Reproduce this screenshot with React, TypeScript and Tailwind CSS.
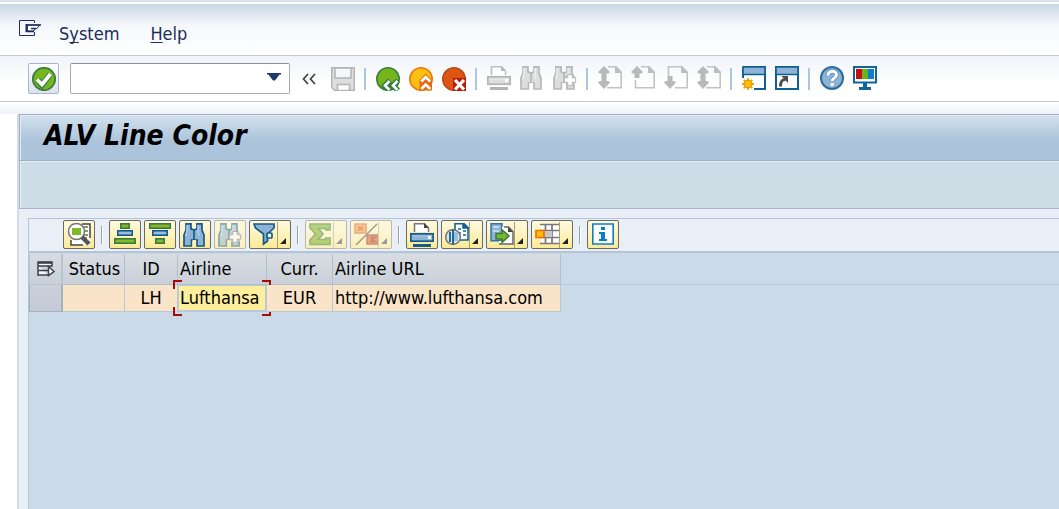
import type { ReactNode } from "react";

function Icon({ children, faded = false, w = 24 }: { children: ReactNode; faded?: boolean; w?: number }) {
  return (
    <svg
      width={w}
      height="24"
      viewBox={`0 0 ${w} 24`}
      fill="none"
      aria-hidden="true"
      className={faded ? "block shrink-0 opacity-50" : "block shrink-0"}
    >
      {children}
    </svg>
  );
}

/* ---------- standard toolbar icons ---------- */

const Save = () => (
  <Icon>
    <path d="M.7.7h22.6v22.6H3.5L.7 20.5z" fill="#dedede" stroke="#b4b4b4" strokeWidth="1.5" />
    <path d="M4 1h16v10H4z" fill="#f4f6f9" stroke="#b4b4b4" strokeWidth="1.5" />
    <path d="M6.500 17.500h12v6h-12z" fill="#fff" stroke="#b4b4b4" strokeWidth="1.5" />
  </Icon>
);

const Check = () => (
  <Icon>
    <circle cx="12" cy="12" r="11.200" fill="#76b51b" stroke="#3c7f42" strokeWidth="1.800" />
    <path d="M5.500 13l4.500 5L18 7.500" stroke="#3c7f42" strokeWidth="6" />
    <path d="M5 12.500l5 5L18.500 7" stroke="#fff" strokeWidth="3.600" />
  </Icon>
);

const Back = () => (
  <Icon>
    <circle cx="12" cy="12" r="11.200" fill="#76b51b" stroke="#3c7f42" strokeWidth="1.600" />
    <path d="M14 13.500L9 18.500l5 5M22 13.500l-5 5 5 5" stroke="#2f7a3c" strokeWidth="5.500" />
    <path d="M13.500 14L9 18.500l4.500 4.500M21.500 14L17 18.500l4.500 4.500" stroke="#fff" strokeWidth="2.600" />
  </Icon>
);

const Exit = () => (
  <Icon>
    <circle cx="12" cy="12" r="11.200" fill="#fdc010" stroke="#ee7a10" strokeWidth="1.600" />
    <path d="M10.500 14.500l6-6.500 6.500 6.500v9H10.500z" fill="#e86a10" />
    <path d="M12 15l4.700-4.700L21.500 15M12 22.500l4.700-4.700 4.800 4.700" stroke="#e86a10" strokeWidth="5" />
    <path d="M12.300 14.500l4.400-4.400 4.500 4.400M12.300 22l4.400-4.400 4.500 4.400" stroke="#fff" strokeWidth="2.800" />
  </Icon>
);

const Cancel = () => (
  <Icon>
    <circle cx="12" cy="12" r="11.200" fill="#dc5512" stroke="#b84a1c" strokeWidth="1.600" />
    <path d="M11 11h13v13H11z" fill="#bd1c0c" />
    <path d="M13 13l9 9.500M22 13l-9 9.500" stroke="#fff" strokeWidth="3.200" />
  </Icon>
);

function Printer({ gray = false }: { gray?: boolean }) {
  const edge = gray ? "#b4b4b4" : "#145b87";
  return (
    <Icon>
      <path d="M4.500 9V.800h10L18.500 5v4" fill="#fff" stroke={gray ? "#bdbdbd" : "#777"} strokeWidth="1.500" />
      <path d="M14 0v5h5z" fill={gray ? "#b8b8b8" : "#444"} />
      <rect x=".8" y="10.800" width="22.400" height="7.400" fill={gray ? "#dedede" : "#8fb2d7"} stroke={edge} strokeWidth="1.700" />
      <path d="M2 13h20" stroke={gray ? "#eeeeee" : "#a8c6e3"} />
      <path d="M18 13h3v3h-3z" fill="#fff" />
      <path d="M3 21h18v3H3z" fill={edge} />
    </Icon>
  );
}

function Binoculars({ gray = false, plus = false }: { gray?: boolean; plus?: boolean }) {
  const edge = gray ? "#b7b7b7" : "#145b87";
  return (
    <Icon>
      <path
        d="M3 .8h5v5l3 1.200V17H8.500v6H1V12l2-5zM14 .800h5V7l2 5v11h-7v-6h-3V7l3-1.200z"
        fill={gray ? "#dddddd" : "#8fb2d7"}
        stroke={edge}
        strokeWidth="1.700"
      />
      <path d="M4 2v5L3 13M15 2v5l1 6" stroke={gray ? "#eee" : "#b6d0e9"} strokeWidth="1.500" />
      <path d="M9.500 17h3.500v7H9.500z" fill={gray ? "#fff" : "#fff0b0"} />
      {plus && (
        <>
          <circle cx="17" cy="14" r="6" fill={gray ? "#c4c4c4" : "#8fb2d7"} />
          <path
            d="M14.800 8.500h4.400v3.300h3.500v4.400h-3.500v3.500h-4.400v-3.500h-3.500v-4.400h3.500z"
            fill="#fff"
            stroke={gray ? "#b7b7b7" : "#6a6ab0"}
            strokeWidth="1"
          />
        </>
      )}
    </Icon>
  );
}

function PageMove({ up = false, down = false }: { up?: boolean; down?: boolean }) {
  return (
    <Icon>
      <path
        d={up && down ? "M10 .8h8l5.200 5.200v15.700H9" : up ? "M10 .800h8l5.200 5.200v15.700H4.500V14" : "M4.500 11V.800H18l5.200 5.200v15.700H11"}
        stroke="#c3c3c3"
        strokeWidth="1.600"
      />
      <path d="M17 0v7h7z" fill="#bdbdbd" />
      {up && <path d="M6 0l6 6-1.500 1.500H8.500V12h-5V7.500H1.500L0 6z" fill="#b9b9b9" />}
      {down && <path d="M3.500 10h5v5h2L12 16.500 6 23l-6-6.500L1.500 15h2z" fill="#b9b9b9" />}
    </Icon>
  );
}

const NewSession = () => (
  <Icon>
    <path d="M2 9h20v13H2z" fill="#fff" />
    <path d="M1 1h22v22H12M1 12V1" stroke="#0f5f92" strokeWidth="2" />
    <path d="M1 1h22v7.500H1z" fill="#8fb2d7" stroke="#0f5f92" strokeWidth="1.600" />
    <path d="M0 12.500h12V24H0z" fill="#fafbfd" />
    <path
      d="M6 12v12M0 18h12M1.800 13.800l8.400 8.400M10.200 13.800l-8.400 8.400"
      stroke="#f59a08"
      strokeWidth="1.800"
    />
    <circle cx="6" cy="18" r="3.800" fill="#ffc400" stroke="#f28a00" />
  </Icon>
);

const Shortcut = () => (
  <Icon>
    <path d="M1 1h22v22H1z" fill="#fff" stroke="#0f5f92" strokeWidth="2" />
    <path d="M1 1h22v7.500H1z" fill="#8fb2d7" stroke="#0f5f92" strokeWidth="1.600" />
    <path d="M5.500 20.500c0-5 1-7 5-7" stroke="#4a4a4a" strokeWidth="3" />
    <path d="M6.500 10H13v7z" fill="#4a4a4a" />
  </Icon>
);

const HelpMark = () => (
  <Icon>
    <circle cx="12" cy="12" r="11" fill="#8fb2d7" stroke="#2b6c9c" strokeWidth="2" />
    <path d="M8 9.500C8 4 16.500 4 16.500 8.800c0 3-4.300 3.200-4.300 6.200" stroke="#5f93bf" strokeWidth="5" />
    <path d="M8 9.500C8 4 16.500 4 16.500 8.800c0 3-4.300 3.200-4.300 6.200M12.200 17v3" stroke="#fff" strokeWidth="3" />
  </Icon>
);

const Monitor = () => (
  <Icon>
    <path d="M1 1h22v15.500H1z" fill="#fff" stroke="#12649a" strokeWidth="2" />
    <path d="M3 3h6v10H3z" fill="#c80c14" />
    <path d="M9 3h6v10H9z" fill="#6cb41c" />
    <path d="M15 3h6v10h-6z" fill="#0c7fd0" />
    <path d="M10 17h4v5h-4zM6 21h12v3H6z" fill="#12649a" />
  </Icon>
);

/* ---------- grid toolbar icons ---------- */

const Details = () => (
  <Icon>
    <path d="M13 1h10v21H4v-6" fill="#fff" />
    <path d="M15 1h8v14M4 17v5h12" stroke="#444" strokeWidth="1.500" />
    <path d="M16 4h5M17 8h4M17 12h4M15 15h5" stroke="#4f8a34" strokeWidth="1.500" />
    <circle cx="9.500" cy="8.500" r="8" fill="#fff" stroke="#747474" strokeWidth="1.500" />
    <path d="M5 5h9v7H5z" fill="#80b82b" />
    <path d="M15 14l7 7" stroke="#555" strokeWidth="4.500" />
  </Icon>
);

function SortBars({ descending = false }: { descending?: boolean }) {
  return (
    <Icon>
      <g strokeWidth="1.600">
        <rect x={descending ? 1.800 : 7.800} y=".8" width={descending ? 20.400 : 8.400} height="4.400" fill="#86b928" stroke="#397a42" />
        <rect x="4.800" y="7.800" width="14.400" height="4.400" fill="#9bbde0" stroke="#145b87" />
        <rect x={descending ? 7.800 : 1.800} y="15.800" width={descending ? 8.400 : 20.400} height="4.400" fill="#86b928" stroke="#397a42" />
      </g>
    </Icon>
  );
}

const Filter = () => (
  <Icon>
    <path d="M1 1h20v4l-6.500 6v7l-4 3V11L2.500 5z" fill="#8fb2d7" stroke="#145b87" strokeWidth="1.700" />
    <rect x="14" y="10" width="5" height="5" rx="1" fill="#f0f5fb" stroke="#145b87" strokeWidth="1.700" />
  </Icon>
);

const Sum = () => (
  <Icon faded>
    <path d="M1 1h20v6h-4V5.500H9.500L14 11l-5 5.500H17V15h4v6.500H1V17l5.500-6L1 5z" fill="#75b21a" stroke="#397a42" strokeWidth="1.700" />
  </Icon>
);

const Subtotal = () => (
  <Icon faded>
    <path d="M1 1h11v9H1z" fill="#f79a4a" stroke="#db6330" strokeWidth="1.500" />
    <path d="M13 12h11v9H13z" fill="#dc5438" stroke="#a92d25" strokeWidth="1.500" />
    <path d="M4 3.500l5 4M9 3.500l-5 4" stroke="#c5381d" strokeWidth="1.500" />
    <path d="M16 14.500h5l-3 2 3 2h-5" stroke="#842a25" strokeWidth="1.300" />
    <path d="M2 22L23 1" stroke="#444" strokeWidth="1.500" />
  </Icon>
);

const Views = () => (
  <Icon>
    <path d="M10 .8h9l4 4V17H10z" fill="#fff" stroke="#12649a" strokeWidth="1.600" />
    <path d="M18 0v5h5zM13 6h3M18 8h3M13 10h3M18 12h3" fill="#12649a" stroke="#12649a" strokeWidth="1.600" />
    <circle cx="8" cy="14" r="7.300" fill="#d8e8f4" stroke="#747474" strokeWidth="1.500" />
    <path d="M8 6.500v15M5 9v10" stroke="#145b87" strokeWidth="1.800" />
    <path d="M9 9h4v9H9z" fill="#9bbde0" />
  </Icon>
);

const Export = () => (
  <Icon>
    <path d="M1 .8h11v17H1z" fill="#8fb2d7" stroke="#3474a5" strokeWidth="1.500" />
    <path d="M3 4h6M3 8h6" stroke="#d8e6f4" strokeWidth="1.500" />
    <path d="M11 4h8l4 4v13H9v-3h3V4z" fill="#fff" />
    <path d="M14 4h4.500L23 8.500V21H9" stroke="#666" strokeWidth="1.500" />
    <path d="M18 4v5h5z" fill="#444" />
    <path d="M6 10.500h6V7l7 6-7 6.500V16H6z" fill="#79b82a" stroke="#367a3c" strokeWidth="1.500" />
  </Icon>
);

const Layout = () => (
  <Icon>
    <path d="M6 1.500h18v19H6z" fill="#fff" />
    <path d="M5 1.500h19M5 7.500h19M5 14.500h19M5 20.500h19M10.500 1v20M17 1v20" stroke="#777" strokeWidth="1.700" />
    <path d="M10 8h7v6h-7z" fill="#c8c8c8" />
    <path d="M1 7.500h8v7H1z" fill="#ffc20b" stroke="#ee6d0f" strokeWidth="1.700" />
  </Icon>
);

const Info = () => (
  <Icon>
    <path d="M1.800 1h20.400v20H1.800z" fill="#fff" stroke="#0a7fc4" strokeWidth="1.600" />
    <path d="M10 4h4v3h-4zM8 9h6v7h2v2H8v-2h2v-5H8z" fill="#0a7fc4" />
  </Icon>
);

/* ---------- buttons ---------- */

function Tool({ label, children }: { label: string; children: ReactNode }) {
  return (
    <button type="button" aria-label={label} className="block shrink-0">
      {children}
    </button>
  );
}

const Divider = () => <span className="h-[22px] w-[3px] shrink-0 border-l-2 border-[#a9c6e2]" />;

function GridButton({
  label,
  children,
  menu = false,
  disabled = false,
}: {
  label: string;
  children: ReactNode;
  menu?: boolean;
  disabled?: boolean;
}) {
  const edge = disabled ? "border-[#bbb7a9] from-[#fcf8df] to-[#fbf0bd]" : "border-[#6d6a60] from-[#fffae0] to-[#fcea96]";
  return (
    <button
      type="button"
      aria-label={label}
      disabled={disabled}
      className={`relative flex h-[29px] shrink-0 items-center rounded-xs border bg-linear-to-b pt-px pl-[3px] ${edge} ${menu ? "w-[42px]" : "w-8"}`}
    >
      {children}
      {menu && (
        <>
          <span className={`h-full border-l ${disabled ? "border-[#d5cfb5]" : "border-[#aaa06f]"}`} />
          <svg
            width="6"
            height="6"
            viewBox="0 0 6 6"
            aria-hidden="true"
            className={`absolute right-1 bottom-1 ${disabled ? "fill-[#999]" : "fill-[#222]"}`}
          >
            <path d="M6 0v6H0z" />
          </svg>
        </>
      )}
    </button>
  );
}

const GridDivider = () => (
  <span className="flex h-[29px] w-2 shrink-0 items-center justify-center">
    <span className="h-[18px] w-0.5 border-r border-l border-r-white border-l-[#9da1a7]" />
  </span>
);

const columns = [
  { title: "Status", className: "w-[62px] pl-0.5 text-center" },
  { title: "ID", className: "w-[53px] text-center" },
  { title: "Airline", className: "w-[89px] pl-0.5 text-left" },
  { title: "Curr.", className: "w-[66px] text-center" },
  { title: "Airline URL", className: "w-[228px] pl-0.5 text-left" },
];

const rows = [["", "LH", "Lufthansa", "EUR", "http://www.lufthansa.com"]];

function CellCursor() {
  const corner = "absolute size-[9px] border-[#a80a0a]";
  return (
    <span className="pointer-events-none absolute -inset-x-[5px] -inset-y-[5px]">
      <span className={`${corner} top-0 left-0 border-t-2 border-l-2`} />
      <span className={`${corner} top-0 right-0 border-t-2 border-r-2`} />
      <span className={`${corner} bottom-0 left-0 border-b-2 border-l-2`} />
      <span className={`${corner} right-0 bottom-0 border-r-2 border-b-2`} />
    </span>
  );
}

export default function App() {
  return (
    <div className="flex min-h-screen flex-col bg-white font-['DejaVu_Sans_Condensed','DejaVu_Sans',sans-serif] text-lg leading-6 text-black">
      <div className="h-1 border-t border-b-2 border-t-[#dbe6f2] border-b-white bg-[#d5e1ef]" />
      <nav className="flex h-[52px] items-start gap-[18px] border-b border-[#c2c9d3] bg-linear-to-b from-[#c9d6e6] via-[#f4f7fa] via-40% to-white pt-4 pl-[19px] text-[#1c2d5e]">
        <button type="button" aria-label="Menu">
          <svg width="22" height="17" viewBox="0 0 22 17" fill="none" stroke="#1c2d5e" aria-hidden="true">
            <path d="M15.500 3V.500H.500v15h15V12" />
            <path d="M8 5h12.500L18 8.500h-2L14.500 11H8z" fill="#fff" />
            <path d="M8 11.500V5h14M7 11.500h8M17 8.500h-5" strokeWidth="1.500" />
            <path d="M7.500 4v8" strokeWidth="2" />
          </svg>
        </button>
        <div className="flex gap-[31px] pt-0.5">
          <button type="button">
            S<span className="underline underline-offset-2 [text-decoration-skip-ink:none]">y</span>stem
          </button>
          <button type="button">
            <span className="underline underline-offset-2">H</span>elp
          </button>
        </div>
      </nav>

      <div className="flex h-[46px] items-center gap-[9px] border-b border-[#c2cad5] bg-linear-to-b from-[#f0f3f9] to-white to-60% pl-7">
        <button
          type="button"
          aria-label="Enter"
          className="mr-0.5 flex h-[31px] w-[31px] shrink-0 items-center justify-center rounded-xs border border-[#a9b6d3] bg-linear-to-b from-white to-[#dce2ec]"
        >
          <Check />
        </button>
        <div className="flex h-[31px] w-[220px] shrink-0 items-center rounded-xs border border-[#a9abb0] border-t-[#8e9095] bg-white">
          <input aria-label="Command" className="h-full min-w-0 flex-1 bg-transparent px-1 outline-none" />
          <button type="button" aria-label="Command history" className="px-2 pb-1">
            <svg width="14" height="8" viewBox="0 0 14 8" fill="#20376c" aria-hidden="true">
              <path d="M0 0h14v1.500h-1.500L8 7.500H6L1.500 1.500H0z" />
            </svg>
          </button>
        </div>
        <button type="button" aria-label="Hide command field" className="mr-1.5 ml-[3px] shrink-0">
          <svg width="14" height="12" viewBox="0 0 14 12" fill="none" stroke="#484848" strokeWidth="1.800" aria-hidden="true">
            <path d="M6 1L1.500 6 6 11M13 1L8.500 6l4.500 5" />
          </svg>
        </button>
        <Tool label="Save"><Save /></Tool>
        <Divider />
        <Tool label="Back"><Back /></Tool>
        <Tool label="Exit"><Exit /></Tool>
        <Tool label="Cancel"><Cancel /></Tool>
        <Divider />
        <div className="flex gap-[9px] pb-0.5">
          <Tool label="Print"><Printer gray /></Tool>
          <Tool label="Find"><Binoculars gray /></Tool>
          <Tool label="Find next"><Binoculars gray plus /></Tool>
        </div>
        <Divider />
        <div className="flex gap-[9px] pb-0.5">
          <Tool label="First page"><PageMove up down /></Tool>
          <Tool label="Previous page"><PageMove up /></Tool>
          <Tool label="Next page"><PageMove down /></Tool>
          <Tool label="Last page"><PageMove up down /></Tool>
        </div>
        <Divider />
        <div className="flex gap-[9px] pb-0.5">
          <Tool label="New session"><NewSession /></Tool>
          <Tool label="Create shortcut"><Shortcut /></Tool>
        </div>
        <Divider />
        <div className="flex gap-[9px] pb-0.5">
          <Tool label="Help on screen"><HelpMark /></Tool>
          <Tool label="Customize layout"><Monitor /></Tool>
        </div>
      </div>

      <div className="flex flex-1 flex-col bg-linear-to-b from-white to-[#edf2f8] to-[12px]">
        <div className="mt-3 flex flex-1 bg-white pl-[17px]">
          <main className="flex min-w-0 flex-1 flex-col border-l-2 border-[#d2dce8] bg-[#e8eff6]">
            <header className="flex h-[47px] items-center border-t border-b border-l border-[#9fb0c5] bg-linear-to-b from-[#d3e1ec] to-[#abc3db] to-60% pb-1 pl-6 shadow-[inset_1px_1px_0_#e2ebf3]">
              <h1 className="text-[28px] leading-8 font-bold italic">ALV Line Color</h1>
            </header>
            <div className="h-12 border-b border-l border-[#a6b5c9] bg-[#cfdde7] shadow-[inset_1px_1px_0_#e8f0f6]" />

            <section className="mt-[9px] ml-[9px] flex flex-1 flex-col border-t border-l border-[#b5c4d7]">
              <div className="flex h-[33px] items-start gap-[3px] border-b border-[#b5c4d7] pt-px pl-[34px]">
                <GridButton label="Details"><Details /></GridButton>
                <GridDivider />
                <GridButton label="Sort ascending"><SortBars /></GridButton>
                <GridButton label="Sort descending"><SortBars descending /></GridButton>
                <GridButton label="Find in list"><Binoculars /></GridButton>
                <GridButton label="Find next in list" disabled>
                  <span className="opacity-50"><Binoculars plus /></span>
                </GridButton>
                <GridButton label="Set filter" menu><Filter /></GridButton>
                <GridDivider />
                <GridButton label="Total" menu disabled><Sum /></GridButton>
                <GridButton label="Subtotals" menu disabled><Subtotal /></GridButton>
                <GridDivider />
                <GridButton label="Print list"><Printer /></GridButton>
                <GridButton label="Views" menu><Views /></GridButton>
                <GridButton label="Export" menu><Export /></GridButton>
                <GridButton label="Change layout" menu><Layout /></GridButton>
                <GridDivider />
                <GridButton label="Information"><Info /></GridButton>
              </div>

              <div className="flex-1 border-t border-[#b5c4d7] bg-[#cbdae8] bg-[linear-gradient(#b9c8dc,#b9c8dc)] bg-size-[100%_1px] bg-position-[0_31px] bg-no-repeat pt-px">
                <table className="table-fixed border-separate border-spacing-0">
                  <thead>
                    <tr className="h-[31px]">
                      <th className="w-[34px] border-r-2 border-b border-l border-[#b7c4d4] bg-linear-to-b from-[#d6dce1] to-[#c9d0d8] p-0">
                        <button type="button" aria-label="Select all" className="flex w-full justify-center">
                          <svg width="18" height="16" viewBox="0 0 18 16" fill="none" stroke="#3c3f50" strokeWidth="1.500" aria-hidden="true">
                            <path d="M1 1h14v4H1zM1 5v9h10M1 9.500h10" fill="#f5f6f8" />
                            <path d="M1 1.800h14" strokeWidth="2" />
                            <path d="M11.500 5.500v9l5.500-4z" fill="#fff" />
                          </svg>
                        </button>
                      </th>
                      {columns.map((c) => (
                        <th
                          key={c.title}
                          className={`border-r border-b border-[#b2bfcf] bg-linear-to-b from-[#d8dde2] to-[#c9d0d8] p-0 font-normal whitespace-nowrap ${c.className}`}
                        >
                          {c.title}
                        </th>
                      ))}
                    </tr>
                  </thead>
                  <tbody>
                    {rows.map((row) => (
                      <tr key={row[1]} className="h-[27px]">
                        <td className="border-r-2 border-b border-l border-[#a3b1c1] bg-linear-to-b from-[#cbd1db] to-[#c5cbd5] p-0">
                          <button type="button" aria-label="Select row" className="block h-full w-full" />
                        </td>
                        {row.map((value, i) => (
                          <td
                            key={columns[i].title}
                            className={`relative border-r border-b border-[#b9c8da] p-0 whitespace-nowrap ${columns[i].className} ${
                              i === 2 ? "bg-[#ffef9c] shadow-[inset_0_0_0_1px_#b9c8da]" : "bg-[#f9e4c8]"
                            }`}
                          >
                            {value}
                            {i === 2 && <CellCursor />}
                          </td>
                        ))}
                      </tr>
                    ))}
                  </tbody>
                </table>
              </div>
            </section>
          </main>
        </div>
      </div>
    </div>
  );
}
